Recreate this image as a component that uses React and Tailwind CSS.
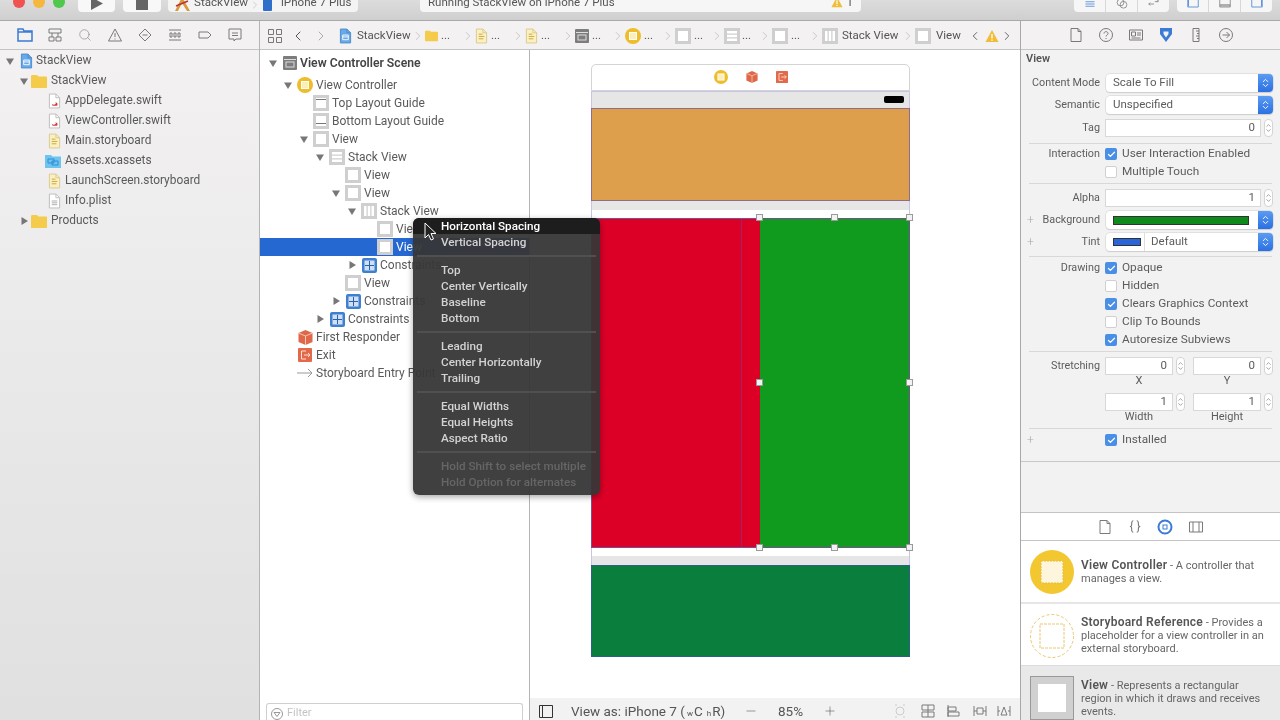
import React from 'react'
import { ChevronLeft, ChevronRight, ChevronUp, ChevronDown, Search, Check, Minus, Plus } from 'lucide-react'

/* ───────── small drawings ───────── */
const Arrow = ({ open }) => (
  <svg width="10" height="10" viewBox="0 0 10 10" className="shrink-0">
    {open ? <path d="M1 2.5h8L5 9z" fill="#777" /> : <path d="M2.5 1v8L9 5z" fill="#777" />}
  </svg>
)
const Doc = ({ fill = '#fff', edge = '#bbb', mark }) => (
  <svg width="13" height="16" viewBox="0 0 14 16" className="shrink-0">
    <path d="M1.500.5h7l4 4v11h-11z" fill={fill} stroke={edge} />
    <path d="M8.500.5v4h4" fill="none" stroke={edge} />
    {mark === 'swift' && <path d="M4 11c2 1.500 4 1 4.500-.5L8 9l2 1.500c.5 1 .5 2-.5 2.500H5z" fill="#d8383a" />}
    {mark === 'board' && <path d="M4 6h4M4 8.500h6M4 11h5" stroke="#c9a52c" fill="none" />}
    {mark === 'plist' && <path d="M4 8h6M4 10h6M4 12h6" stroke="#aaa" fill="none" />}
    {mark === 'proj' && <path d="M4 7h6v5H4zM4 9h6" stroke="#fff" fill="none" />}
  </svg>
)
const Folder = ({ w = 16, h = 14 }) => (
  <svg width={w} height={h} viewBox="0 0 16 14" className="shrink-0">
    <path d="M0 2.500C0 1.500.5 1 1.500 1H6l1.500 1.500H15c.6 0 1 .4 1 1V13c0 .6-.4 1-1 1H1c-.6 0-1-.4-1-1z" fill="#f5cb4c" />
  </svg>
)
const Assets = () => (
  <svg width="16" height="14" viewBox="0 0 16 14" className="shrink-0">
    <path d="M0 1h6l1.500 1.500H16V14H0z" fill="#6fc3ef" />
    <path d="M3 5h6v4H3zM7 7h6v4H7z" fill="none" stroke="#2b8fd6" />
  </svg>
)
const ViewIco = ({ size = 16 }) => (
  <svg width={size} height={size} viewBox="0 0 16 16" className="shrink-0">
    <rect x="0" y="0" width="16" height="16" fill="#cfcfcf" />
    <rect x="3" y="3" width="10" height="10" fill="#fff" />
  </svg>
)
const GuideIco = ({ bottom }) => (
  <svg width="16" height="16" viewBox="0 0 16 16" className="shrink-0">
    <rect width="16" height="16" fill="#cfcfcf" />
    <rect x="3" y="3" width="10" height="10" fill="#fff" />
    <path d={bottom ? 'M3 10.500h10' : 'M3 4.500h10'} stroke="#777" />
  </svg>
)
const StackV = () => (
  <svg width="16" height="16" viewBox="0 0 16 16" className="shrink-0">
    <rect width="16" height="16" fill="#cfcfcf" />
    <path d="M3 3h10v2.500H3zM3 6.750h10v2.500H3zM3 10.500h10V13H3z" fill="#fff" />
  </svg>
)
const StackH = () => (
  <svg width="16" height="16" viewBox="0 0 16 16" className="shrink-0">
    <rect width="16" height="16" fill="#cfcfcf" />
    <path d="M3 3h2.500v10H3zM6.750 3h2.500v10h-2.500zM10.500 3H13v10h-2.500z" fill="#fff" />
  </svg>
)
const SceneIco = () => (
  <svg width="14" height="14" viewBox="0 0 14 14" className="shrink-0">
    <rect width="14" height="14" rx="1" fill="#7d7d7d" />
    <path d="M1 3.500h12" stroke="#ddd" />
    <rect x="3" y="6" width="8" height="5" fill="none" stroke="#ddd" />
  </svg>
)
const VcIco = ({ size = 16 }) => (
  <svg width={size} height={size} viewBox="0 0 16 16" className="shrink-0">
    <circle cx="8" cy="8" r="8" fill="#eebd2c" />
    <rect x="4.500" y="4.500" width="7" height="7" fill="#fbeeb8" stroke="#fff" />
  </svg>
)
const ConstraintIco = () => (
  <svg width="15" height="15" viewBox="0 0 15 15" className="shrink-0">
    <rect width="15" height="15" rx="2" fill="#3f7fd0" />
    <rect x="2.500" y="2.500" width="10" height="10" fill="#cfe0f5" />
    <path d="M7.500 3v9M3 7.500h9" stroke="#2a62aa" />
  </svg>
)
const CubeIco = ({ size = 15 }) => (
  <svg width={size} height={size} viewBox="0 0 15 15" className="shrink-0">
    <path d="M7.500 0L14.500 3v9l-7 3-7-3V3z" fill="#e0684a" />
    <path d="M.5 3l7 3 7-3M7.500 6v9" stroke="#f6c9b8" fill="none" />
  </svg>
)
const ExitIco = ({ size = 14 }) => (
  <svg width={size} height={size} viewBox="0 0 14 14" className="shrink-0">
    <rect width="14" height="14" rx="1" fill="#e2694a" />
    <path d="M8 3H3.500v8H8M6 7h6M10 5l2 2-2 2" stroke="#fbe0d6" fill="none" />
  </svg>
)
const Warn = ({ size = 14 }) => (
  <svg width={size} height={size} viewBox="0 0 14 14" className="shrink-0">
    <path d="M7 1l6.500 12H.5z" fill="#f2bd36" />
    <path d="M7 5v4.500M7 10.500v1.200" stroke="#fff" strokeWidth="1.300" />
  </svg>
)
const Sep = () => <ChevronRight size={14} strokeWidth={1} className="text-[#aaa] shrink-0" />

/* thin grey tab glyphs */
const Glyph = ({ children, w = 16, h = 16, blue }) => (
  <svg width={w} height={h} viewBox="0 0 16 16" fill="none" stroke={blue ? '#3a7bd5' : '#7a7a7a'} className="shrink-0">{children}</svg>
)

/* ───────── data ───────── */
const files = [
  ['pl-[5px]', true, <div className="ml-[3px] -mr-[1px]"><Doc fill="#69a9e8" edge="#4a8bd0" mark="proj" /></div>, 'StackView'],
  ['pl-[19px]', true, <Folder />, 'StackView'],
  ['pl-[48px]', null, <Doc mark="swift" />, 'AppDelegate.swift'],
  ['pl-[48px]', null, <Doc mark="swift" />, 'ViewController.swift'],
  ['pl-[48px]', null, <Doc fill="#fbf0c4" edge="#d8c98c" mark="board" />, 'Main.storyboard'],
  ['pl-[45px]', null, <Assets />, 'Assets.xcassets'],
  ['pl-[48px]', null, <Doc fill="#fbf0c4" edge="#d8c98c" mark="board" />, 'LaunchScreen.storyboard'],
  ['pl-[48px]', null, <Doc mark="plist" />, 'Info.plist'],
  ['pl-[19px]', false, <Folder />, 'Products'],
]

const tree = [
  ['pl-[22px]', true, <VcIco />, 'View Controller'],
  ['pl-[38px]', null, <GuideIco />, 'Top Layout Guide'],
  ['pl-[38px]', null, <GuideIco bottom />, 'Bottom Layout Guide'],
  ['pl-[38px]', true, <ViewIco />, 'View'],
  ['pl-[54px]', true, <StackV />, 'Stack View'],
  ['pl-[70px]', null, <ViewIco />, 'View'],
  ['pl-[70px]', true, <ViewIco />, 'View'],
  ['pl-[86px]', true, <StackH />, 'Stack View'],
  ['pl-[102px]', null, <ViewIco />, 'View'],
  ['pl-[102px]', null, <ViewIco />, 'View', true],
  ['pl-[86px]', false, <ConstraintIco />, 'Constraints'],
  ['pl-[70px]', null, <ViewIco />, 'View'],
  ['pl-[70px]', false, <ConstraintIco />, 'Constraints'],
  ['pl-[54px]', false, <ConstraintIco />, 'Constraints'],
  ['pl-[22px]', null, <CubeIco />, 'First Responder'],
  ['pl-[22px]', null, <ExitIco />, 'Exit'],
  ['pl-[22px]', null, (
    <svg width="16" height="10" viewBox="0 0 16 10" className="shrink-0"><path d="M0 5h15M11 1l4 4-4 4" stroke="#999" fill="none" /></svg>
  ), 'Storyboard Entry Point'],
]

const menu = [
  ['Horizontal Spacing', 'Vertical Spacing'],
  ['Top', 'Center Vertically', 'Baseline', 'Bottom'],
  ['Leading', 'Center Horizontally', 'Trailing'],
  ['Equal Widths', 'Equal Heights', 'Aspect Ratio'],
  ['Hold Shift to select multiple', 'Hold Option for alternates'],
]

/* ───────── inspector bits ───────── */
const Label = ({ children, plus }) => (
  <div className="w-[79px] h-[18px] shrink-0 flex items-center justify-between text-[#5c5c5c] text-[10.8px]">
    <span className="text-[#aaa] pl-[6px] text-[12px] font-light">{plus ? '+' : ''}</span>
    <span>{children}</span>
  </div>
)
const SelectCap = () => (
  <div className="w-[15px] h-full rounded-r-[4px] bg-gradient-to-b from-[#5a9bf2] to-[#2a70e2] flex flex-col items-center justify-center text-white shrink-0">
    <ChevronUp size={9} strokeWidth={2.5} className="-mb-[2px]" />
    <ChevronDown size={9} strokeWidth={2.5} className="-mt-[2px]" />
  </div>
)
const Select = ({ children }) => (
  <div className="w-[167px] h-[18px] ml-[6px] rounded-[4px] bg-white shadow-[0_0_0_0.5px_#d0d0d0,0_1px_1px_#ccc] flex items-center justify-between text-[11.5px] text-[#5c5c5c]">
    {children}
    <SelectCap />
  </div>
)
const Stepper = () => (
  <div className="w-[9px] h-[18px] ml-[3px] rounded-[4px] bg-white border border-[#d4d4d4] flex flex-col items-center justify-center text-[#666] shrink-0">
    <ChevronUp size={7} strokeWidth={2} className="-mb-px" />
    <ChevronDown size={7} strokeWidth={2} className="-mt-px" />
  </div>
)
const Field = ({ value, w }) => (
  <div className={`${w} h-[18px] bg-white border border-[#d8d8d8] flex items-center justify-end pr-[5px] text-[11.5px] text-[#5c5c5c]`}>{value}</div>
)
const Checkbox = ({ label, on }) => (
  <div className="h-[18px] flex items-center text-[11.8px] text-[#5c5c5c]">
    {on ? (
      <div className="w-[12px] h-[12px] rounded-[2px] bg-[#4a8fe6] flex items-center justify-center text-white shrink-0">
        <Check size={9} strokeWidth={3.5} />
      </div>
    ) : (
      <div className="w-[12px] h-[12px] rounded-[2px] bg-white border border-[#d0d0d0] shrink-0" />
    )}
    <span className="ml-[5px]">{label}</span>
  </div>
)
const Line = ({ className }) => <div className={`h-px mx-[8px] bg-[#d8d8d8] ${className}`} />

const Handle = ({ className }) => (
  <div className={`absolute w-[7px] h-[7px] bg-[#f2f2f2] border border-[#9a9a9a] ${className}`} />
)

const Caption = ({ children }) => (
  <div className="h-[12px] w-[68px] text-center text-[11px] leading-[12px] text-[#5c5c5c]">{children}</div>
)

export default function App() {
  return (
    <div className="relative w-[1280px] h-[720px] overflow-hidden flex flex-col bg-white blur-[0.4px] font-['Roboto',sans-serif]">
      {/* window toolbar, cut off by the top of the frame */}
      <div className="h-[21px] shrink-0 flex items-end pb-[8px] bg-gradient-to-b from-[#dcdcdc] to-[#cfcfcf] border-b border-[#a9a9a9] overflow-hidden text-[11.5px] text-[#555]">
        <div className="w-[12px] h-[12px] ml-[13px] mb-[4px] rounded-full bg-[#f0524f] shrink-0" />
        <div className="w-[12px] h-[12px] ml-[8px] mb-[4px] rounded-full bg-[#f5b73c] shrink-0" />
        <div className="w-[12px] h-[12px] ml-[8px] mb-[4px] rounded-full bg-[#4fc84c] shrink-0" />
        <div className="w-[37px] h-[26px] ml-[13px] rounded-[4px] bg-[#f8f8f8] flex items-end justify-center pb-[2px] shrink-0">
          <svg width="12" height="13" viewBox="0 0 12 13"><path d="M0 0l12 6.500L0 13z" fill="#666" /></svg>
        </div>
        <div className="w-[38px] h-[26px] ml-[8px] rounded-[4px] bg-[#f8f8f8] flex items-end justify-center pb-[2px] shrink-0">
          <div className="w-[12px] h-[12px] bg-[#666]" />
        </div>
        <div className="w-[190px] h-[26px] ml-[7px] rounded-[4px] bg-[#f4f4f4] flex items-end pb-[1px] pl-[6px] shrink-0">
          <svg width="17" height="14" viewBox="0 0 17 14" className="shrink-0"><path d="M8 0L1 14h3l4-8 5 8h3z" fill="#d89a3a" /><path d="M2 9l12-5" stroke="#b33" strokeWidth="1.500" /></svg>
          <span className="ml-[3px] text-[11.6px]">StackView</span>
          <ChevronRight size={12} strokeWidth={1} className="text-[#aaa] ml-[1px]" />
          <svg width="13" height="14" viewBox="0 0 13 14" className="ml-[1px] shrink-0"><rect x="1" width="9" height="14" rx="1" fill="#2d6fc9" /></svg>
          <span className="ml-[6px] text-[11.6px]">iPhone 7 Plus</span>
        </div>
        <div className="w-[441px] h-[26px] ml-[62px] rounded-[4px] bg-[#f6f6f6] flex items-end pb-[1px] pl-[8px] justify-between pr-[8px] shrink-0">
          <span>Running StackView on iPhone 7 Plus</span>
          <span className="flex items-center gap-[4px]"><Warn size={12} /> 1</span>
        </div>
        <div className="w-[95px] h-[26px] ml-[213px] rounded-[4px] bg-[#f6f6f6] flex items-end shrink-0">
          <div className="w-[32px] flex justify-center pb-[2px] border-r border-[#d8d8d8]"><Glyph blue w={14} h={12}><path d="M2 5h12M2 8h12M2 11h12" /></Glyph></div>
          <div className="w-[32px] flex justify-center pb-[2px] border-r border-[#d8d8d8]"><Glyph w={14} h={12}><circle cx="6" cy="6" r="4.500" /><circle cx="10" cy="9" r="4.500" /></Glyph></div>
          <div className="w-[31px] flex justify-center pb-[2px]"><Glyph w={14} h={12}><path d="M1 8h7M3 6L1 8l2 2M9 5l5-1M12 2l2 2-2 2" /></Glyph></div>
        </div>
        <div className="w-[95px] h-[26px] ml-[8px] rounded-[4px] bg-[#f6f6f6] flex items-end shrink-0">
          <div className="w-[32px] flex justify-center pb-[2px] border-r border-[#d8d8d8]"><Glyph blue w={14} h={12}><path d="M1 0v12h14V0M2 1v10" /></Glyph></div>
          <div className="w-[32px] flex justify-center pb-[2px] border-r border-[#d8d8d8]"><Glyph w={14} h={12}><path d="M1 0v12h14V0M1 9h14M1 10.500h14" /></Glyph></div>
          <div className="w-[31px] flex justify-center pb-[2px]"><Glyph blue w={14} h={12}><path d="M1 0v12h14V0M14 1v10" /></Glyph></div>
        </div>
      </div>

      <div className="flex-1 flex min-h-0">
        {/* navigator */}
        <div className="w-[260px] shrink-0 flex flex-col border-r border-[#b4b4b4] bg-gradient-to-b from-[#f4f2f2] to-[#e0e0e0]">
          <div className="h-[29px] shrink-0 flex items-center pl-[10px] border-b border-[#c4c4c4] bg-[#f3f1f1]">
            <div className="w-[30px] flex justify-center"><svg width="16" height="14" viewBox="0 0 16 14" fill="none" stroke="#3a7bd5" strokeWidth="1.500"><path d="M1 1h5l1 2h8v10H1zM1 4h14" /></svg></div>
            <div className="w-[30px] flex justify-center"><Glyph><path d="M2 2h12v4H2zM2 10h5v4H2zM9 10h5v4H9zM5 6v4M11 6v4" /></Glyph></div>
            <div className="w-[30px] flex justify-center"><Search size={14} strokeWidth={1} className="text-[#7a7a7a]" /></div>
            <div className="w-[30px] flex justify-center"><Glyph><path d="M8 2l6.500 12h-13zM8 6v4M8 11.500v1" /></Glyph></div>
            <div className="w-[30px] flex justify-center"><Glyph><path d="M8 2l6 6-6 6-6-6zM5.500 8h5" /></Glyph></div>
            <div className="w-[30px] flex justify-center"><Glyph><path d="M2 3h12M2 13h12M3 6h2v4H3zM7 6h2v4H7zM11 6h2v4h-2z" /></Glyph></div>
            <div className="w-[30px] flex justify-center"><Glyph><path d="M2 5h9l3 3-3 3H2z" /></Glyph></div>
            <div className="w-[30px] flex justify-center"><Glyph><path d="M2 2h12v10H9l-2 2v-2H2zM5 6h6M5 8.500h6" /></Glyph></div>
          </div>
          <div className="flex-1 pt-[1px] text-[11.9px] text-[#5a5a5a]">
            {files.map(([pl, open, icon, name], i) => (
              <div key={i} className={`h-[20px] flex items-center ${pl}`}>
                {open !== null && <Arrow open={open} />}
                {open !== null && <div className="w-[2px]" />}
                {icon}
                <span className="ml-[4px]">{name}</span>
              </div>
            ))}
          </div>
        </div>

        <div className="w-[760px] shrink-0 flex flex-col">
          {/* jump bar */}
          <div className="h-[29px] shrink-0 flex items-center pt-[1px] border-b border-[#c4c4c4] bg-[#f3f1f1] text-[11.5px] text-[#555]">
            <svg width="14" height="14" viewBox="0 0 14 14" fill="none" stroke="#777" className="ml-[8px] shrink-0"><path d="M.5.5h5v5h-5zM8.500.5h5v5h-5zM.5 8.500h5v5h-5zM8.500 8.500h5v5h-5z" /></svg>
            <ChevronLeft size={16} strokeWidth={1.500} className="ml-[8px] text-[#555] shrink-0" />
            <ChevronRight size={16} strokeWidth={1.500} className="ml-[7px] text-[#aaa] shrink-0" />
            <div className="ml-[10px] shrink-0"><Doc fill="#69a9e8" edge="#4a8bd0" mark="proj" /></div>
            <span className="ml-[5px] w-[54px]">StackView</span>
            <Sep />
            <div className="w-[50px] flex items-center shrink-0"><Folder w={13} h={13} /><span className="ml-[3px] w-[20px]">...</span><Sep /></div>
            <div className="w-[50px] flex items-center shrink-0"><Doc fill="#fbf0c4" edge="#d8c98c" mark="board" /><span className="ml-[3px] w-[20px]">...</span><Sep /></div>
            <div className="w-[50px] flex items-center shrink-0"><Doc fill="#fbf0c4" edge="#d8c98c" mark="board" /><span className="ml-[3px] w-[20px]">...</span><Sep /></div>
            <div className="w-[50px] flex items-center shrink-0"><SceneIco /><span className="ml-[3px] w-[19px]">...</span><Sep /></div>
            <div className="w-[50px] flex items-center shrink-0"><VcIco /><span className="ml-[3px] w-[17px]">...</span><Sep /></div>
            <div className="w-[49px] flex items-center shrink-0"><ViewIco /><span className="ml-[3px] w-[16px]">...</span><Sep /></div>
            <div className="w-[48px] flex items-center shrink-0"><StackV /><span className="ml-[2px] w-[16px]">...</span><Sep /></div>
            <div className="w-[50px] flex items-center shrink-0"><ViewIco /><span className="ml-[3px] w-[17px]">...</span><Sep /></div>
            <StackH />
            <span className="ml-[4px] w-[59px]">Stack View</span>
            <Sep />
            <ViewIco />
            <span className="ml-[5px] w-[30px]">View</span>
            <ChevronLeft size={14} strokeWidth={1.500} className="ml-[2px] shrink-0" />
            <div className="ml-[3px] shrink-0"><Warn /></div>
            <ChevronRight size={14} strokeWidth={1.500} className="ml-[1px] shrink-0" />
          </div>

          <div className="flex-1 flex min-h-0">
            {/* document outline */}
            <div className="w-[270px] shrink-0 flex flex-col border-r border-[#b4b4b4] bg-white text-[12px] text-[#5a5a5a]">
              <div className="pt-[4px]">
                <div className="h-[18px] flex items-center pl-[8px] mb-[4px] font-semibold text-[12.2px] text-[#444]">
                  <Arrow open /><div className="w-[5px]" /><SceneIco /><span className="ml-[3px]">View Controller Scene</span>
                </div>
                {tree.map(([pl, open, icon, name, selected], i) => (
                  <div key={i} className={`h-[18px] flex items-center ${pl} ${selected ? 'bg-[#2568d2] text-white' : ''}`}>
                    <div className="w-[15px] pl-[1px] shrink-0">{open !== null && <Arrow open={open} />}</div>
                    <div className="w-[16px] flex justify-center shrink-0">{icon}</div>
                    <span className="ml-[3px] whitespace-nowrap">{name}</span>
                  </div>
                ))}
              </div>
              <div className="mt-auto mx-[6px] h-[17px] flex items-center pt-[3px] border border-b-0 border-[#cfcfcf] rounded-t-[3px] pl-[4px] text-[11px] text-[#c4c4c4] bg-white">
                <svg width="12" height="12" viewBox="0 0 12 12" fill="none" stroke="#999" className="shrink-0"><circle cx="6" cy="6" r="5.500" /><path d="M3 4.500h6l-3 4z" /></svg>
                <span className="ml-[4px]">Filter</span>
              </div>
            </div>

            {/* canvas */}
            <div className="flex-1 flex flex-col bg-white min-w-0">
              <div className="flex-1 pl-[61px] pt-[14px] min-h-0">
                <div className="w-[319px]">
                  <div className="h-[27px] pb-[2px] rounded-t-[5px] border border-[#d4d4d4] bg-white flex items-center justify-center gap-[18px]">
                    <VcIco size={14} />
                    <CubeIco size={12} />
                    <ExitIco size={12} />
                  </div>
                  <div className="h-[17px] pb-[1px] bg-[#e6e6e6] border-x border-t border-[#c9c3e5] flex items-center justify-end pr-[5px]">
                    <div className="w-[20px] h-[7px] rounded-[2px] bg-black" />
                  </div>
                  <div className="h-[93px] bg-[#dd9f4b] border border-[#8f6c8a]" />
                  <div className="h-[9px] bg-[#e6e6e6] border-x border-[#c9c3e5]" />
                  <div className="h-[8px] bg-white border-x border-[#c9c3e5]" />
                  <div className="relative h-[330px] flex border border-[#7a4f8f]">
                    <div className="w-[150px] bg-[#dc0027] border-r border-[#a3206a]" />
                    <div className="w-[18px] bg-[#dc0027]" />
                    <div className="flex-1 bg-[#109a1e]" />
                    <Handle className="left-[164px] -top-[5px]" />
                    <Handle className="left-[239px] -top-[5px]" />
                    <Handle className="left-[314px] -top-[5px]" />
                    <Handle className="left-[164px] top-[160px]" />
                    <Handle className="left-[314px] top-[160px]" />
                    <Handle className="left-[164px] top-[325px]" />
                    <Handle className="left-[239px] top-[325px]" />
                    <Handle className="left-[314px] top-[325px]" />
                  </div>
                  <div className="h-[8px] bg-white border-x border-[#c9c3e5]" />
                  <div className="h-[9px] bg-[#e6e6e6] border-x border-[#c9c3e5]" />
                  <div className="h-[92px] bg-[#097e3d] border border-[#2c5f8a]" />
                </div>
              </div>
              <div className="h-[22px] shrink-0 pt-[4px] bg-[#f2f2f2] flex items-center text-[13.5px] text-[#555]">
                <svg width="14" height="14" viewBox="0 0 14 14" fill="none" stroke="#333" className="ml-[9px] shrink-0"><path d="M.5 1.500h13v12H.5zM3.500 1.500v12" /></svg>
                <span className="ml-[18px] w-[173px] whitespace-nowrap">View as: iPhone 7 (<span className="text-[8px] ml-[2px]">w</span><span className="ml-[1px]">C</span><span className="text-[8px] ml-[4px]">h</span><span className="ml-[1px]">R)</span></span>
                <Minus size={14} strokeWidth={1} className="shrink-0" />
                <span className="ml-[20px] w-[44px]">85%</span>
                <Plus size={14} strokeWidth={1} className="ml-[1px] shrink-0" />
                <div className="ml-[55px] shrink-0"><Glyph><path d="M3 2h2M11 2h2M3 14h2M11 14h2" stroke="#ccc" /><circle cx="8" cy="8" r="4" stroke="#ccc" /></Glyph></div>
                <div className="ml-[12px] shrink-0"><Glyph><path d="M2 2h12v5H2zM2 9h12v5H2zM8 2v12" /></Glyph></div>
                <div className="ml-[9px] shrink-0"><Glyph><path d="M3 2v12M3 4h8v4H3zM3 9h11v4H3z" /></Glyph></div>
                <div className="ml-[11px] shrink-0"><Glyph><path d="M2 3v10M14 3v10M5 5h6v6H5zM2 8h3M11 8h3" /></Glyph></div>
                <div className="ml-[8px] shrink-0"><Glyph><path d="M2 3v10M14 3v10M8 4l3 8H5zM2 8h2M12 8h2" /></Glyph></div>
              </div>
            </div>
          </div>
        </div>

        {/* inspector */}
        <div className="flex-1 flex flex-col min-w-0 border-l border-[#a8a8a8] bg-[#f2f2f2]">
          <div className="h-[29px] shrink-0 flex items-center pl-[40px] border-b border-[#c4c4c4] bg-[#f3f1f1]">
            <div className="w-[30px] flex justify-center"><Glyph><path d="M3 1.500h7l3 3v10H3zM10 1.500v3h3" /></Glyph></div>
            <div className="w-[30px] flex justify-center"><Glyph><circle cx="8" cy="8" r="6.500" /><path d="M6 6.500C6 4 10 4 10 6.500 10 8 8 8 8 9.500M8 11v1" /></Glyph></div>
            <div className="w-[30px] flex justify-center"><Glyph><path d="M1.500 3h13v10h-13zM3.500 5h4v4h-4zM9 6h4M9 8h4M3.500 11h9" /></Glyph></div>
            <div className="w-[30px] flex justify-center">
              <svg width="16" height="16" viewBox="0 0 16 16"><path d="M2 1h12v6l-6 8-6-8z" fill="#3a7bd5" /><path d="M5.500 4.500h5V7L8 10.500 5.500 7z" fill="#f3f1f1" /></svg>
            </div>
            <div className="w-[30px] flex justify-center"><Glyph><path d="M5 1.500h6v13H5zM8 4h3M9 6.500h2M8 9h3M9 11.500h2" /></Glyph></div>
            <div className="w-[30px] flex justify-center"><Glyph><circle cx="8" cy="8" r="6.500" /><path d="M4.500 8h7M8.500 5l3 3-3 3" /></Glyph></div>
          </div>

          <div className="flex-1 min-h-0">
            <div className="h-[19px] pl-[5px] flex items-center text-[11px] font-semibold text-[#555]">View</div>
            <div className="mt-[5px] flex"><Label>Content Mode</Label><Select><span className="pl-[7px]">Scale To Fill</span></Select></div>
            <div className="mt-[4px] flex"><Label>Semantic</Label><Select><span className="pl-[7px]">Unspecified</span></Select></div>
            <div className="mt-[5px] flex"><Label>Tag</Label><div className="ml-[5px]"><Field value="0" w="w-[156px]" /></div><Stepper /></div>
            <Line className="mt-[6px]" />
            <div className="mt-px flex"><Label>Interaction</Label><div className="ml-[5px]"><Checkbox on label="User Interaction Enabled" /><Checkbox label="Multiple Touch" /></div></div>
            <Line className="mt-[2px]" />
            <div className="mt-[5px] flex"><Label>Alpha</Label><div className="ml-[5px]"><Field value="1" w="w-[156px]" /></div><Stepper /></div>
            <div className="mt-[4px] flex"><Label plus>Background</Label>
              <Select><div className="ml-[7px] flex-1 h-[9px] mr-[9px] bg-[#0f8a1c] border border-[#333]" /></Select>
            </div>
            <div className="mt-[4px] flex"><Label plus>Tint</Label>
              <Select>
                <div className="w-[39px] h-full flex items-center pl-[7px] border-r border-[#ddd] shrink-0"><div className="w-[28px] h-[8px] bg-[#2a66d8] border border-[#333]" /></div>
                <span className="pl-[6px] flex-1">Default</span>
              </Select>
            </div>
            <Line className="mt-[5px]" />
            <div className="mt-[2px] flex"><Label>Drawing</Label>
              <div className="ml-[5px]">
                <Checkbox on label="Opaque" />
                <Checkbox label="Hidden" />
                <Checkbox on label="Clears Graphics Context" />
                <Checkbox label="Clip To Bounds" />
                <Checkbox on label="Autoresize Subviews" />
              </div>
            </div>
            <Line className="mt-[2px]" />
            <div className="mt-[5px] flex"><Label>Stretching</Label>
              <div className="ml-[5px] w-[80px]">
                <div className="flex"><Field value="0" w="w-[68px]" /><Stepper /></div>
                <Caption>X</Caption>
              </div>
              <div className="ml-[8px] w-[80px]">
                <div className="flex"><Field value="0" w="w-[68px]" /><Stepper /></div>
                <Caption>Y</Caption>
              </div>
            </div>
            <div className="mt-[6px] flex"><div className="w-[84px] shrink-0" />
              <div className="w-[80px]">
                <div className="flex"><Field value="1" w="w-[68px]" /><Stepper /></div>
                <Caption>Width</Caption>
              </div>
              <div className="ml-[8px] w-[80px]">
                <div className="flex"><Field value="1" w="w-[68px]" /><Stepper /></div>
                <Caption>Height</Caption>
              </div>
            </div>
            <Line className="mt-[5px]" />
            <div className="mt-[2px] flex"><Label plus></Label><div className="ml-[5px]"><Checkbox on label="Installed" /></div></div>
            <div className="mt-[12px] h-px bg-[#c8c8c8]" />
          </div>

          {/* object library */}
          <div className="h-[208px] shrink-0 flex flex-col bg-white border-t border-[#c4c4c4] overflow-hidden text-[11px] leading-[13px] text-[#666]">
            <div className="h-[28px] shrink-0 flex items-center pl-[69px] border-b border-[#c4c4c4]">
              <div className="w-[30px] flex justify-center"><Glyph><path d="M3 1.500h7l3 3v10H3zM10 1.500v3h3" /></Glyph></div>
              <div className="w-[30px] flex justify-center text-[12px] text-[#777]">{'{ }'}</div>
              <div className="w-[30px] flex justify-center"><Glyph blue><circle cx="8" cy="8" r="6.500" strokeWidth="2" /><rect x="6" y="6" width="4" height="4" /></Glyph></div>
              <div className="w-[32px] flex justify-center"><Glyph><path d="M1.500 3h13v10h-13zM5 3v10M11 3v10" /></Glyph></div>
            </div>
            <div className="h-[63px] shrink-0 flex items-center pl-[9px] border-b-2 border-[#e6e6e6]">
              <svg width="44" height="44" viewBox="0 0 44 44" className="shrink-0">
                <circle cx="22" cy="22" r="22" fill="#f3c72f" />
                <rect x="11" y="11" width="22" height="22" fill="#fdf6dd" stroke="#e8bd3a" strokeDasharray="2 1" />
              </svg>
              <div className="ml-[7px] w-[185px]"><b className="font-semibold text-[12px] tracking-[0.25px] text-[#555]">View Controller</b> - A controller that manages a view.</div>
            </div>
            <div className="h-[62px] shrink-0 pt-[2px] flex items-center pl-[9px] border-b border-[#dcdcdc]">
              <svg width="44" height="44" viewBox="0 0 44 44" fill="none" stroke="#e8c870" className="shrink-0">
                <circle cx="22" cy="22" r="21.500" strokeDasharray="3 2" />
                <rect x="10" y="10" width="24" height="24" strokeDasharray="3 1" />
              </svg>
              <div className="ml-[7px] w-[190px]"><b className="font-semibold text-[12px] tracking-[0.25px] text-[#555]">Storyboard Reference</b> - Provides a placeholder for a view controller in an external storyboard.</div>
            </div>
            <div className="flex-1 flex pl-[9px] pt-[10px] bg-[#e9e9e9]">
              <div className="w-[44px] h-[44px] shrink-0 bg-[#d0d0d0] border border-[#999] flex items-center justify-center">
                <div className="w-[28px] h-[28px] bg-white" />
              </div>
              <div className="ml-[7px] w-[180px] mt-[3px]"><b className="font-semibold text-[12px] tracking-[0.25px] text-[#555]">View</b> - Represents a rectangular region in which it draws and receives events.</div>
            </div>
          </div>
        </div>
      </div>

      {/* the floating constraints menu */}
      <div className="absolute left-[413px] top-[218px] w-[187px] h-[277px] rounded-[6px] bg-[#363636]/95 shadow-[0_2px_6px_rgba(0,0,0,0.35)] text-[11.7px] font-medium leading-[16px] text-[#d2d2d2] overflow-hidden">
        {menu.map((group, g) => (
          <div key={g}>
            {group.map((item, i) => (
              <div key={item} className={`h-[16px] pl-[28px] whitespace-nowrap ${g === 0 && i === 0 ? 'bg-[#1d1d1d] text-white' : ''} ${g === 4 ? 'text-[#666]' : ''}`}>{item}</div>
            ))}
            {g < 4 && <div className="h-[12px] flex items-center px-[4px]"><div className="h-[1.5px] w-full bg-[#505050]" /></div>}
          </div>
        ))}
      </div>
      <svg width="14" height="20" viewBox="0 0 14 20" className="absolute left-[424px] top-[222px]">
        <path d="M1 1v15l3.500-3.500L7 18l2.500-1-2.500-5.500h5z" fill="#222" stroke="#fff" strokeWidth="1" />
      </svg>
    </div>
  )
}
